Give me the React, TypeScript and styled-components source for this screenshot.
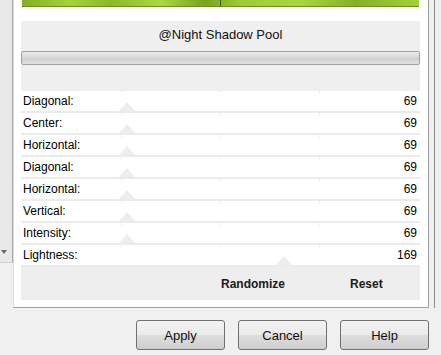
import styled, { createGlobalStyle } from 'styled-components';

const GlobalStyle = createGlobalStyle`
	body {
		margin: 0;
		background: #f0f0f0;
		font-family: 'Liberation Sans', Arial, sans-serif;
	}
`;

const rows = [
	{ label: 'Diagonal:', value: 69, thumb: 128 },
	{ label: 'Center:', value: 69, thumb: 128 },
	{ label: 'Horizontal:', value: 69, thumb: 128 },
	{ label: 'Diagonal:', value: 69, thumb: 128 },
	{ label: 'Horizontal:', value: 69, thumb: 128 },
	{ label: 'Vertical:', value: 69, thumb: 128 },
	{ label: 'Intensity:', value: 69, thumb: 128 },
	{ label: 'Lightness:', value: 169, thumb: 285 },
];

function App() {
	return (
		<StyledWindow>
			<GlobalStyle />
			<StyledTop>
				<StyledSideStrip>
					<StyledDropArrow />
				</StyledSideStrip>
				<StyledFrame>
					<StyledSwatch />
					<StyledTitlePanel>
						<StyledTitle>@Night Shadow Pool</StyledTitle>
						<StyledBar />
					</StyledTitlePanel>
					<div>
						{rows.map((row, i) => (
							<StyledRow key={i} $thumb={row.thumb - 22}>
								<span>{row.label}</span>
								<StyledValue>{row.value}</StyledValue>
							</StyledRow>
						))}
					</div>
					<StyledFooter>
						<StyledFooterAction>Randomize</StyledFooterAction>
						<StyledFooterAction>Reset</StyledFooterAction>
					</StyledFooter>
				</StyledFrame>
				<StyledGutter />
			</StyledTop>
			<StyledButtonRow>
				<StyledButton>Apply</StyledButton>
				<StyledButton>Cancel</StyledButton>
				<StyledButton>Help</StyledButton>
			</StyledButtonRow>
		</StyledWindow>
	);
}

const StyledWindow = styled.div`
	width: 441px;
	height: 355px;
	background: #f0f0f0;
	overflow: hidden;
`;

const StyledTop = styled.div`
	display: flex;
	height: 308px;
`;

const StyledSideStrip = styled.div`
	width: 13px;
	height: 263px;
	flex-shrink: 0;
	box-sizing: border-box;
	background: #e9e9e9;
	border-right: 1px solid #a9a9a9;
	border-bottom: 1px solid #d0d0d0;
	display: flex;
	flex-direction: column;
	justify-content: flex-end;
	padding: 0 0 8px 1px;
`;

const StyledDropArrow = styled.div`
	width: 0;
	height: 0;
	border-left: 3px solid transparent;
	border-right: 3px solid transparent;
	border-top: 4px solid #6a6a6a;
`;

const StyledFrame = styled.div`
	flex: 1;
	height: 308px;
	box-sizing: border-box;
	background: #ffffff;
	border-left: 1px solid #dcdcdc;
	border-right: 1px solid #a0a0a0;
	border-bottom: 1px solid #a0a0a0;
	padding: 0 8px 0 7px;
`;

const StyledSwatch = styled.div`
	height: 7px;
	margin: 0 1px;
	box-sizing: border-box;
	border-bottom: 1px solid #6c8f1c;
	background:
		linear-gradient(to right, transparent 198px, #3e5a10 198px, #3e5a10 199px, transparent 199px),
		linear-gradient(
			to right,
			#84ad26 0%,
			#a5d43c 12%,
			#8cb82c 22%,
			#a9d845 35%,
			#7aa21f 46%,
			#9ccb36 55%,
			#a8d742 70%,
			#86b02a 84%,
			#a2d03a 100%
		);
`;

const StyledTitlePanel = styled.div`
	margin-top: 14px;
	height: 70px;
	box-sizing: border-box;
	background: #efefef;
	padding-top: 6px;
`;

const StyledTitle = styled.div`
	text-align: center;
	font-size: 13px;
	line-height: 16px;
	color: #111;
`;

const StyledBar = styled.div`
	margin-top: 8px;
	height: 14px;
	box-sizing: border-box;
	border: 1px solid #a3a3a3;
	border-radius: 2px;
	background: linear-gradient(#e9e9e9 0%, #dadada 45%, #cfcfcf 55%, #e2e2e2 100%);
`;

const StyledRow = styled.div<{ $thumb: number }>`
	position: relative;
	height: 20px;
	border-bottom: 2px solid #ebebeb;
	display: flex;
	align-items: center;
	justify-content: space-between;
	padding: 0 3px 0 2px;
	font-size: 12px;
	color: #000;
	background:
		linear-gradient(#f0f0f0, #f0f0f0) 100px 0 / 1px 3px no-repeat,
		linear-gradient(#f0f0f0, #f0f0f0) 199px 0 / 1px 3px no-repeat,
		linear-gradient(#f0f0f0, #f0f0f0) 298px 0 / 1px 3px no-repeat,
		#ffffff;

	&::after {
		content: '';
		position: absolute;
		left: ${(p) => p.$thumb - 8}px;
		bottom: 0;
		width: 0;
		height: 0;
		border-left: 8px solid transparent;
		border-right: 8px solid transparent;
		border-bottom: 9px solid #ededed;
	}
`;

const StyledValue = styled.span`
	font-size: 12px;
`;

const StyledFooter = styled.div`
	height: 33px;
	background: #eeeeee;
	display: flex;
	align-items: center;
	gap: 65px;
	padding-left: 200px;
	font-size: 12px;
	font-weight: bold;
	color: #1a1a1a;
`;

const StyledFooterAction = styled.span`
	cursor: pointer;
`;

const StyledGutter = styled.div`
	width: 12px;
	flex-shrink: 0;
	background: linear-gradient(
		to right,
		transparent 5px,
		#8c8c8c 5px,
		#8c8c8c 6px,
		transparent 6px
	);
`;

const StyledButtonRow = styled.div`
	display: flex;
	justify-content: flex-end;
	gap: 13px;
	padding: 12px 12px 0 0;
`;

const StyledButton = styled.button`
	width: 89px;
	height: 30px;
	margin: 0;
	box-sizing: border-box;
	border: 1px solid #707070;
	border-radius: 3px;
	background: linear-gradient(#f2f2f2 0%, #ebebeb 48%, #dddddd 52%, #cfcfcf 100%);
	font-family: 'Liberation Sans', Arial, sans-serif;
	font-size: 13px;
	color: #111;
	padding: 0;
`;

export default App;
